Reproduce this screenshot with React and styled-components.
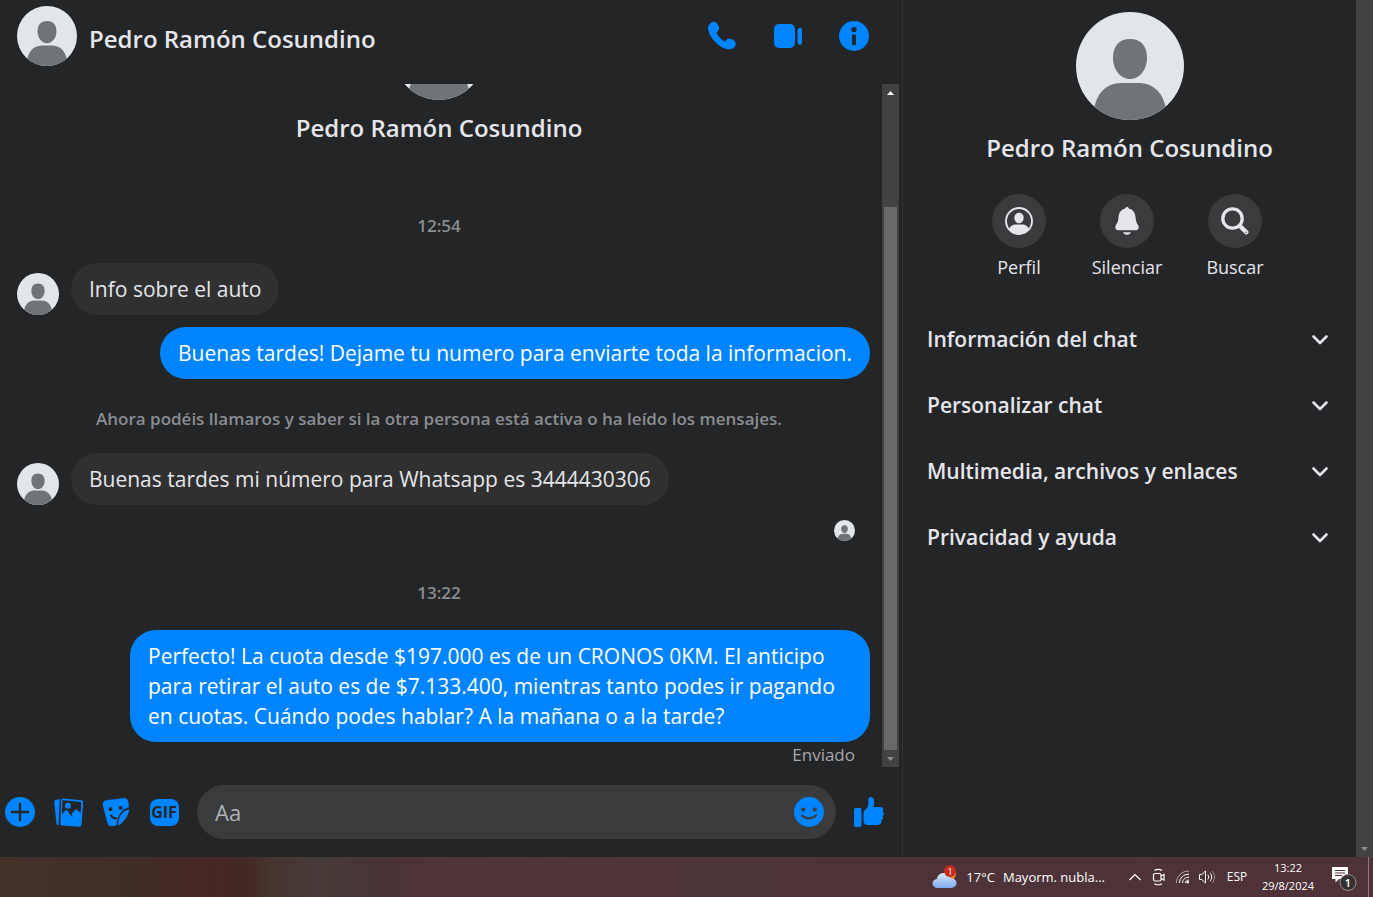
import styled, { createGlobalStyle, css } from 'styled-components';

const colors = {
  surface: '#242527',
  bubble: '#303030',
  control: '#3a3b3c',
  blue: '#0084ff',
  text: '#e4e6eb',
  muted: '#8a8d91',
  soft: '#b0b3b8',
  track: '#424242',
  thumb: '#686868',
};

const GlobalStyle = createGlobalStyle`
  * {
    box-sizing: border-box;
  }
  body {
    margin: 0;
    background: ${colors.surface};
    color: ${colors.text};
    font-family: 'Open Sans', 'Noto Sans', sans-serif;
  }
  button, input {
    font-family: inherit;
    color: inherit;
  }
`;

// Layout
const Screen = styled.div`
  display: flex;
  flex-direction: column;
  height: 100vh;
  overflow: hidden;
`;

const Messenger = styled.div`
  display: flex;
  flex: 1;
  min-height: 0;
`;

const Chat = styled.main`
  display: flex;
  flex: 1;
  flex-direction: column;
  min-width: 0;
`;

const ChatHeader = styled.header`
  display: flex;
  align-items: center;
  height: 84px;
  padding: 0 33px 12px 17px;
  border-bottom: 1px solid #222325;
`;

const HeaderActions = styled.div`
  display: flex;
  gap: 36px;
  margin-left: auto;
`;

const Name = styled.h2`
  margin: ${({ $margin }) => $margin || 0};
  font-size: 24px;
  line-height: 36px;
  font-weight: 600;
  text-align: ${({ $center }) => ($center ? 'center' : 'left')};
  white-space: nowrap;
`;

const IconButton = styled.button`
  display: flex;
  flex: none;
  align-items: center;
  justify-content: center;
  width: 30px;
  height: 30px;
  padding: 0;
  border: 0;
  background: none;
  color: ${colors.blue};
  cursor: pointer;
`;

const AvatarSvg = styled.svg`
  display: block;
  flex: none;
  width: ${({ $size }) => $size}px;
  height: ${({ $size }) => $size}px;
  border-radius: 50%;
`;

// Messages
const Conversation = styled.div`
  display: flex;
  flex: 1;
  min-height: 0;
  padding-right: 3px;
`;

const MessageList = styled.div`
  display: flex;
  flex: 1;
  flex-direction: column;
  justify-content: flex-end;
  min-width: 0;
  padding: 0 12px 0 8px;
  overflow: hidden;
`;

const Intro = styled.div`
  display: flex;
  flex-direction: column;
  align-items: center;
`;

const Stamp = styled.div`
  margin: ${({ $margin }) => $margin};
  color: ${colors.muted};
  font-size: 17px;
  line-height: 24px;
  font-weight: 600;
  text-align: center;
`;

const Row = styled.div`
  display: flex;
  align-items: flex-end;
  justify-content: ${({ $own }) => ($own ? 'flex-end' : 'flex-start')};
  gap: 12px;
  padding-left: 9px;
  margin-top: ${({ $gap }) => $gap || 0}px;
`;

const Bubble = styled.div`
  max-width: 740px;
  padding: 11px 18px;
  border-radius: 26px;
  background: ${colors.bubble};
  font-size: 21px;
  line-height: 30px;

  ${({ $own }) =>
    $own &&
    css`
      background: ${colors.blue};
      color: white;
    `}
`;

const Seen = styled.div`
  display: flex;
  justify-content: flex-end;
  margin-top: 15px;
  padding-right: 15px;
`;

const Status = styled.div`
  margin-top: 1px;
  padding-right: 15px;
  color: #a5a7ab;
  font-size: 17px;
  line-height: 24px;
  text-align: right;
`;

// Scrollbar
const Track = styled.div`
  display: flex;
  flex: none;
  flex-direction: column;
  align-items: center;
  justify-content: space-between;
  width: 17px;
  background: ${colors.track};
`;

const Thumb = styled.div`
  flex: 1;
  width: 13px;
  margin-top: 106px;
  background: ${colors.thumb};
`;

const Arrow = styled.svg`
  display: block;
  width: 17px;
  height: 17px;
`;

// Composer
const Composer = styled.form`
  display: flex;
  align-items: center;
  gap: 18px;
  height: 90px;
  padding: 0 18px 0 5px;
`;

const InputBox = styled.div`
  display: flex;
  flex: 1;
  align-items: center;
  min-width: 0;
  height: 54px;
  padding: 0 12px 0 18px;
  border-radius: 27px;
  background: ${colors.control};
`;

const TextInput = styled.input`
  flex: 1;
  min-width: 0;
  padding: 0;
  border: 0;
  outline: 0;
  background: none;
  font-size: 22px;
  line-height: 30px;

  &::placeholder {
    color: ${colors.soft};
    opacity: 1;
  }
`;

// Sidebar
const Sidebar = styled.aside`
  display: flex;
  flex: none;
  width: 471px;
  border-left: 1px solid #303234;
`;

const SidebarBody = styled.div`
  display: flex;
  flex: 1;
  flex-direction: column;
  align-items: center;
  padding-top: 12px;
`;

const QuickActions = styled.div`
  display: flex;
  margin: 28px 5px 0 0;
`;

const QuickAction = styled.button`
  display: flex;
  flex-direction: column;
  align-items: center;
  gap: 5px;
  width: 108px;
  padding: 0;
  border: 0;
  background: none;
  font-size: 18px;
  line-height: 28px;
  cursor: pointer;
`;

const Disc = styled.span`
  display: flex;
  align-items: center;
  justify-content: center;
  width: 54px;
  height: 54px;
  border-radius: 50%;
  background: ${colors.control};
`;

const Sections = styled.div`
  width: 100%;
  margin-top: 25px;
`;

const SectionButton = styled.button`
  display: flex;
  align-items: center;
  justify-content: space-between;
  width: 100%;
  height: 66px;
  padding: 0 24px;
  border: 0;
  background: none;
  font-size: 21px;
  font-weight: 600;
  text-align: left;
  cursor: pointer;
`;

// Taskbar
const Taskbar = styled.footer`
  display: flex;
  flex: none;
  align-items: center;
  justify-content: flex-end;
  height: 40px;
  padding-right: 4px;
  background: linear-gradient(
    90deg,
    #43312a 0,
    #412d28 140px,
    #482725 200px,
    #432826 245px,
    #46352f 275px,
    #463b38 315px,
    #463836 345px,
    #4a3336 385px,
    #51333a 455px,
    #4d3438 700px,
    #4e3238 100%
  );
  color: white;
  font-size: 12px;
  line-height: 18px;
`;

const TrayButton = styled.button`
  display: flex;
  align-items: center;
  justify-content: center;
  gap: 8px;
  min-width: ${({ $width }) => $width || 24}px;
  height: 40px;
  padding: 0;
  border: 0;
  background: none;
  font-size: ${({ $size }) => $size || 12}px;
  line-height: 18px;
  white-space: nowrap;
`;

const Weather = styled(TrayButton)`
  margin-right: 18px;
  font-size: 13px;
`;

const DesktopEdge = styled.div`
  width: 1px;
  height: 40px;
  margin-left: 1px;
  background: #8d7b7e;
`;

const Avatar = ({ size }) => (
  <AvatarSvg $size={size} viewBox="0 0 108 108" aria-hidden="true">
    <rect width="108" height="108" fill="#e2e5ea" />
    <path
      d="M54 27c11 0 17 7 17 19 0 11-7 21-17 21s-17-10-17-21c0-12 6-19 17-19z"
      fill="#707478"
    />
    <path
      d="M17 108c0-22 10-37 28-37h18c18 0 28 15 28 37z"
      fill="#707478"
    />
  </AvatarSvg>
);

const ScrollArrow = ({ up, fill }) => (
  <Arrow viewBox="0 0 17 17" aria-hidden="true">
    <path d={up ? 'M5 11h7L8.500 7z' : 'M5 7h7l-3.500 4z'} fill={fill} />
  </Arrow>
);

const PhoneIcon = () => (
  <svg width="30" height="30" viewBox="0 0 30 30" fill="currentColor">
    <path d="M4.500 1.600C6.300.2 8.700.7 10 2.600c1.500 2.100 2.300 3.900 2.100 5.300-.2 1.300-1.200 2-2 3-.7.900-.5 1.700.2 2.700 1.400 2.200 3.300 4.100 5.600 5.800 1.100.8 2 .9 2.900.1 1-.9 1.600-1.900 3-2 1.600-.1 3.500.8 5.300 2.100 2 1.500 2.300 3.900.8 5.800-1.600 2-4 3.200-7 2.900-4.400-.5-8.900-3.300-12.700-7.400C4.100 16.600 1.300 11.800 1 7.900.8 5.300 2.300 3.300 4.500 1.600z" />
  </svg>
);

const VideoIcon = () => (
  <svg width="30" height="30" viewBox="0 0 30 30" fill="currentColor">
    <rect x="1" y="3" width="21" height="24" rx="5" />
    <path d="M24.500 9.500c0-1.800 1-2.800 2.600-2.800 1.300 0 1.900.6 1.900 1.900v13.200c0 1.300-.6 1.900-1.900 1.900-1.600 0-2.600-1-2.600-2.800z" />
  </svg>
);

const InfoIcon = () => (
  <svg width="30" height="30" viewBox="0 0 30 30">
    <circle cx="15" cy="15" r="15" fill="currentColor" />
    <circle cx="15" cy="8.500" r="2.600" fill={colors.surface} />
    <rect x="13" y="13.500" width="4" height="10.500" rx="1" fill={colors.surface} />
  </svg>
);

const PlusIcon = () => (
  <svg width="30" height="30" viewBox="0 0 30 30">
    <circle cx="15" cy="15" r="15" fill="currentColor" />
    <path d="M15 7v16M7 15h16" stroke={colors.surface} strokeWidth="2.400" strokeLinecap="round" />
  </svg>
);

const GalleryIcon = () => (
  <svg width="30" height="30" viewBox="-1 0 30 30">
    <path d="M2.300 2.800 5.800 2 4.600 28.300l-1-.2c-.9-.2-1.100-.8-1.200-1.600L.3 5.200c-.1-1.300.6-2.200 2-2.400z" fill="currentColor" />
    <path d="m9.300 1.600 17.800 1.600c1.400.1 2.200 1 2.100 2.400l-1.700 22c-.1 1.500-.9 2.200-2.400 2.100L8.300 28.600c-1.400-.1-2-.9-1.900-2.300L7.200 3.600c.1-1.300.8-2.100 2.100-2z" fill="currentColor" />
    <path d="m9.300 3.300 17 1.600c.7.100 1 .5 1 1.100l-.7 10-3.600-3.200c-.7-.6-1.400-.5-2 .2L17.500 16.800 13 13.600c-.7-.5-1.300-.5-1.900.1L7.900 17l.5-12.800c0-.6.300-.9.900-.9z" fill={colors.surface} />
    <path d="m13.500 15.200 5.500 5-1.700-4.200z" fill={colors.surface} />
    <circle cx="14" cy="8.800" r="3" fill="currentColor" />
  </svg>
);

const StickerIcon = () => (
  <svg width="30" height="30" viewBox="0 0 30 30">
    <path d="M5.500 3.200 21.600 1.200c3.800-.5 5.700 1.300 5.900 4.900l.3 4.300c-6.600 1.200-11.400 7.200-12.200 18.100l-4.100.6c-3 .3-4.700-1.200-5.300-3.900L2 9.300c-.8-3.400.4-5.700 3.500-6.100z" fill="currentColor" />
    <path d="M28 12.600c.2 3.800-2.600 8.500-5.700 11.900-1.700 1.900-3.400 3.200-5.300 3.900.6-9.600 4.700-14.700 11-15.800z" fill="currentColor" />
    <circle cx="9.500" cy="12.200" r="1.900" fill={colors.surface} />
    <circle cx="19.600" cy="10.800" r="1.900" fill={colors.surface} />
    <path d="M10 18.600c1.200 1.700 3 2.700 5.200 2.800" stroke={colors.surface} strokeWidth="2" strokeLinecap="round" fill="none" />
  </svg>
);

const GifMark = styled.span`
  display: flex;
  align-items: center;
  justify-content: center;
  width: 29px;
  height: 27px;
  border-radius: 8px;
  background: ${colors.blue};
  color: ${colors.surface};
  font-size: 16px;
  line-height: 27px;
  font-weight: 700;
`;

const SmileIcon = () => (
  <svg width="30" height="30" viewBox="0 0 30 30">
    <circle cx="15" cy="15" r="15" fill="currentColor" />
    <circle cx="9.200" cy="12.500" r="2.100" fill={colors.control} />
    <circle cx="20.800" cy="12.500" r="2.100" fill={colors.control} />
    <path d="M8 18.500c3.800 3.700 10.200 3.700 14 0" stroke={colors.control} strokeWidth="2.200" strokeLinecap="round" fill="none" />
  </svg>
);

const LikeIcon = () => (
  <svg width="30" height="30" viewBox="0 0 30 30" fill="currentColor">
    <rect x="0" y="11" width="7.500" height="19" rx="1.500" />
    <path d="M9.500 16.500c0-1.500.7-2.700 1.800-3.700 2-1.900 3-3.500 3-5.800V3c0-2 .9-3 2.500-3 2.200 0 3.400 2 3.400 5.300 0 1.900-.5 3.400-1 4.700h7.300c1.800 0 2.800.9 2.800 2.400 0 .9-.3 1.500-.9 2 1 .5 1.600 1.300 1.600 2.300 0 1.200-.7 2-1.700 2.400.6.500.9 1.200.8 2-.1 1.100-.9 1.900-2 2.200.4.500.5 1.200.3 1.900-.4 1.600-1.700 2.700-4 2.700H14c-2.900 0-4.500-1.700-4.500-4.500z" />
  </svg>
);

const ProfileIcon = () => (
  <svg width="28" height="28" viewBox="0 0 28 28">
    <circle cx="14" cy="14" r="13" fill="none" stroke="currentColor" strokeWidth="1.900" />
    <path d="M14 5.800c3 0 4.700 2.100 4.700 5s-1.900 5.500-4.700 5.500-4.700-2.600-4.700-5.500 1.700-5 4.700-5z" fill="currentColor" />
    <path d="M4 22c1.200-3 3.600-4.600 6.500-4.600h7c2.900 0 5.300 1.600 6.500 4.600-2.300 3.200-6 5-10 5s-7.700-1.800-10-5z" fill="currentColor" />
  </svg>
);

const BellIcon = () => (
  <svg width="28" height="28" viewBox="0 0 28 28" fill="currentColor">
    <path d="M14 0c1 0 1.700.7 1.900 1.600 4 .9 6.300 4.100 6.600 8.400.2 3.100.7 5 1.900 6.900.9 1.400 1.300 2.200 1.300 3.400 0 1.900-1.200 3-3.200 3h-17c-2 0-3.200-1.100-3.200-3 0-1.200.4-2 1.300-3.400C4.800 15 5.300 13.100 5.500 10c.3-4.300 2.600-7.500 6.600-8.400C12.300.7 13 0 14 0z" />
    <path d="M10 25.300h8c-.5 1.600-2 2.500-4 2.500s-3.500-.9-4-2.500z" />
  </svg>
);

const SearchIcon = () => (
  <svg width="28" height="28" viewBox="0 0 28 28" fill="none" stroke="currentColor">
    <circle cx="11.500" cy="11.500" r="9.700" strokeWidth="3.300" />
    <path d="m19 19 6.300 6.300" strokeWidth="4.400" strokeLinecap="round" />
    <circle cx="25" cy="25.200" r="0.700" fill={colors.control} stroke="none" />
  </svg>
);

const ChevronIcon = () => (
  <svg width="24" height="24" viewBox="0 0 24 24" fill="none" stroke="currentColor">
    <path d="m5.500 9.500 6.500 6.500 6.500-6.500" strokeWidth="2.600" strokeLinecap="round" strokeLinejoin="round" />
  </svg>
);

const WeatherIcon = () => (
  <svg width="26" height="26" viewBox="0 0 26 26">
    <defs>
      <linearGradient id="cloud" x1="0" y1="0" x2="0" y2="1">
        <stop offset="0" stopColor="#dbe9fc" />
        <stop offset="1" stopColor="#7fabed" />
      </linearGradient>
    </defs>
    <circle cx="18" cy="10" r="6" fill="#e98324" />
    <path d="M6 24c-3.300 0-5.500-2-5.500-4.600 0-2.500 1.800-4.300 4.300-4.500C5.500 11.200 8.200 9 11.700 9c3.400 0 6 2.200 6.700 5.200 3.500-.2 6.100 1.900 6.100 4.900 0 2.900-2.200 4.900-5.500 4.900z" fill="url(#cloud)" />
    <circle cx="18" cy="7" r="6" fill="#c42b1c" />
    <text x="18" y="10.500" fill="white" fontSize="9" textAnchor="middle">1</text>
  </svg>
);

const UpIcon = () => (
  <svg width="14" height="10" viewBox="0 0 14 10" fill="none" stroke="white">
    <path d="m1.500 8 5.500-5.500L12.500 8" strokeWidth="1.200" />
  </svg>
);

const MeetIcon = () => (
  <svg width="14" height="18" viewBox="0 0 14 18" fill="none" stroke="white" strokeWidth="1.200">
    <rect x="1.500" y="5.500" width="7.500" height="7.500" rx="1.500" />
    <path d="m9 8 3-1.500v5.500L9 10.500M2.500 2.500c2-1.500 5.500-1.500 7.500 0M2.500 15.800c2 1.300 5.500 1.300 7.500 0" />
  </svg>
);

const WifiIcon = () => (
  <svg width="16" height="16" viewBox="0 0 16 16" fill="none" stroke="white">
    <path d="M1.500 14C1.500 7 7 2 14 2" stroke="#b6a8ab" />
    <path d="M4.500 14C4.500 9 8.500 5.200 14 5.200M7.500 14c0-3.300 2.700-5.800 6.500-5.800M10.300 14c0-1.700 1.500-2.900 3.700-2.900" />
    <circle cx="12.800" cy="13.200" r="1.200" fill="white" stroke="none" />
  </svg>
);

const VolumeIcon = () => (
  <svg width="18" height="16" viewBox="0 0 18 16" fill="none" stroke="white">
    <path d="M1.500 5.500h2.300L7.500 2v12l-3.700-3.500H1.500zM9.800 5.700c1.200 1.400 1.200 3.200 0 4.600M12 3.800c2.200 2.600 2.200 5.800 0 8.400" />
    <path d="M14.200 2c3 3.600 3 8.400 0 12" stroke="#a39497" />
  </svg>
);

const NoticeIcon = () => (
  <svg width="26" height="28" viewBox="0 0 26 28">
    <path d="M1 4h16v12H8l-3.500 3.500V16H1z" fill="white" />
    <path d="M4 7.500h10M4 10h10M4 12.500h7" stroke="#4e3238" />
    <circle cx="17" cy="19.500" r="8" fill="#343031" stroke="#9a9293" />
    <text x="17" y="23.500" fill="white" fontSize="11" fontWeight="600" textAnchor="middle">1</text>
  </svg>
);

const messages = [
  { id: 1, type: 'time', text: '12:54', margin: '68px 0 25px' },
  { id: 2, type: 'message', text: 'Info sobre el auto' },
  {
    id: 3,
    type: 'message',
    own: true,
    gap: 12,
    text: 'Buenas tardes! Dejame tu numero para enviarte toda la informacion.',
  },
  {
    id: 4,
    type: 'time',
    margin: '28px 0 22px',
    text: 'Ahora podéis llamaros y saber si la otra persona está activa o ha leído los mensajes.',
  },
  {
    id: 5,
    type: 'message',
    text: 'Buenas tardes mi número para Whatsapp es 3444430306',
  },
  { id: 6, type: 'seen' },
  { id: 7, type: 'time', text: '13:22', margin: '40px 0 25px' },
  {
    id: 8,
    type: 'message',
    own: true,
    text: 'Perfecto! La cuota desde $197.000 es de un CRONOS 0KM. El anticipo para retirar el auto es de $7.133.400, mientras tanto podes ir pagando en cuotas. Cuándo podes hablar? A la mañana o a la tarde?',
  },
];

const sections = [
  'Información del chat',
  'Personalizar chat',
  'Multimedia, archivos y enlaces',
  'Privacidad y ayuda',
];

const Message = ({ item }) => {
  if (item.type === 'time') {
    return <Stamp $margin={item.margin}>{item.text}</Stamp>;
  }
  if (item.type === 'seen') {
    return (
      <Seen>
        <Avatar size={21} />
      </Seen>
    );
  }
  return (
    <Row $own={item.own} $gap={item.gap}>
      {!item.own && <Avatar size={42} />}
      <Bubble $own={item.own}>{item.text}</Bubble>
    </Row>
  );
};

const App = () => (
  <>
    <GlobalStyle />
    <Screen>
      <Messenger>
        <Chat>
          <ChatHeader>
            <Avatar size={60} />
            <Name $margin="6px 0 0 12px">Pedro Ramón Cosundino</Name>
            <HeaderActions>
              <IconButton aria-label="Llamar"><PhoneIcon /></IconButton>
              <IconButton aria-label="Videollamada"><VideoIcon /></IconButton>
              <IconButton aria-label="Información"><InfoIcon /></IconButton>
            </HeaderActions>
          </ChatHeader>
          <Conversation>
            <MessageList>
              <Intro>
                <Avatar size={90} />
                <Name $margin="10px 0 0" $center>Pedro Ramón Cosundino</Name>
              </Intro>
              {messages.map((item) => (
                <Message key={item.id} item={item} />
              ))}
              <Status>Enviado</Status>
            </MessageList>
            <Track>
              <ScrollArrow up fill="white" />
              <Thumb />
              <ScrollArrow fill="#8b8b8b" />
            </Track>
          </Conversation>
          <Composer onSubmit={(e) => e.preventDefault()}>
            <IconButton type="button" aria-label="Más acciones"><PlusIcon /></IconButton>
            <IconButton type="button" aria-label="Adjuntar foto"><GalleryIcon /></IconButton>
            <IconButton type="button" aria-label="Sticker"><StickerIcon /></IconButton>
            <IconButton type="button"><GifMark>GIF</GifMark></IconButton>
            <InputBox>
              <TextInput aria-label="Mensaje" placeholder="Aa" />
              <IconButton type="button" aria-label="Emoji"><SmileIcon /></IconButton>
            </InputBox>
            <IconButton type="button" aria-label="Me gusta"><LikeIcon /></IconButton>
          </Composer>
        </Chat>
        <Sidebar>
          <SidebarBody>
            <Avatar size={108} />
            <Name $margin="10px 0 0" $center>Pedro Ramón Cosundino</Name>
            <QuickActions>
              <QuickAction><Disc><ProfileIcon /></Disc>Perfil</QuickAction>
              <QuickAction><Disc><BellIcon /></Disc>Silenciar</QuickAction>
              <QuickAction><Disc><SearchIcon /></Disc>Buscar</QuickAction>
            </QuickActions>
            <Sections>
              {sections.map((title) => (
                <SectionButton key={title}>
                  {title}
                  <ChevronIcon />
                </SectionButton>
              ))}
            </Sections>
          </SidebarBody>
          <Track>
            <span />
            <ScrollArrow fill="#8b8b8b" />
          </Track>
        </Sidebar>
      </Messenger>
      <Taskbar>
        <Weather>
          <WeatherIcon />
          <span>17°C</span>
          <span>Mayorm. nubla...</span>
        </Weather>
        <TrayButton aria-label="Iconos ocultos"><UpIcon /></TrayButton>
        <TrayButton aria-label="Reunirse ahora"><MeetIcon /></TrayButton>
        <TrayButton aria-label="Red"><WifiIcon /></TrayButton>
        <TrayButton aria-label="Volumen"><VolumeIcon /></TrayButton>
        <TrayButton $width={36}>ESP</TrayButton>
        <TrayButton $width={66} $size={11}>
          <span>13:22<br />29/8/2024</span>
        </TrayButton>
        <TrayButton $width={46} aria-label="Notificaciones"><NoticeIcon /></TrayButton>
        <DesktopEdge />
      </Taskbar>
    </Screen>
  </>
);

export default App;
